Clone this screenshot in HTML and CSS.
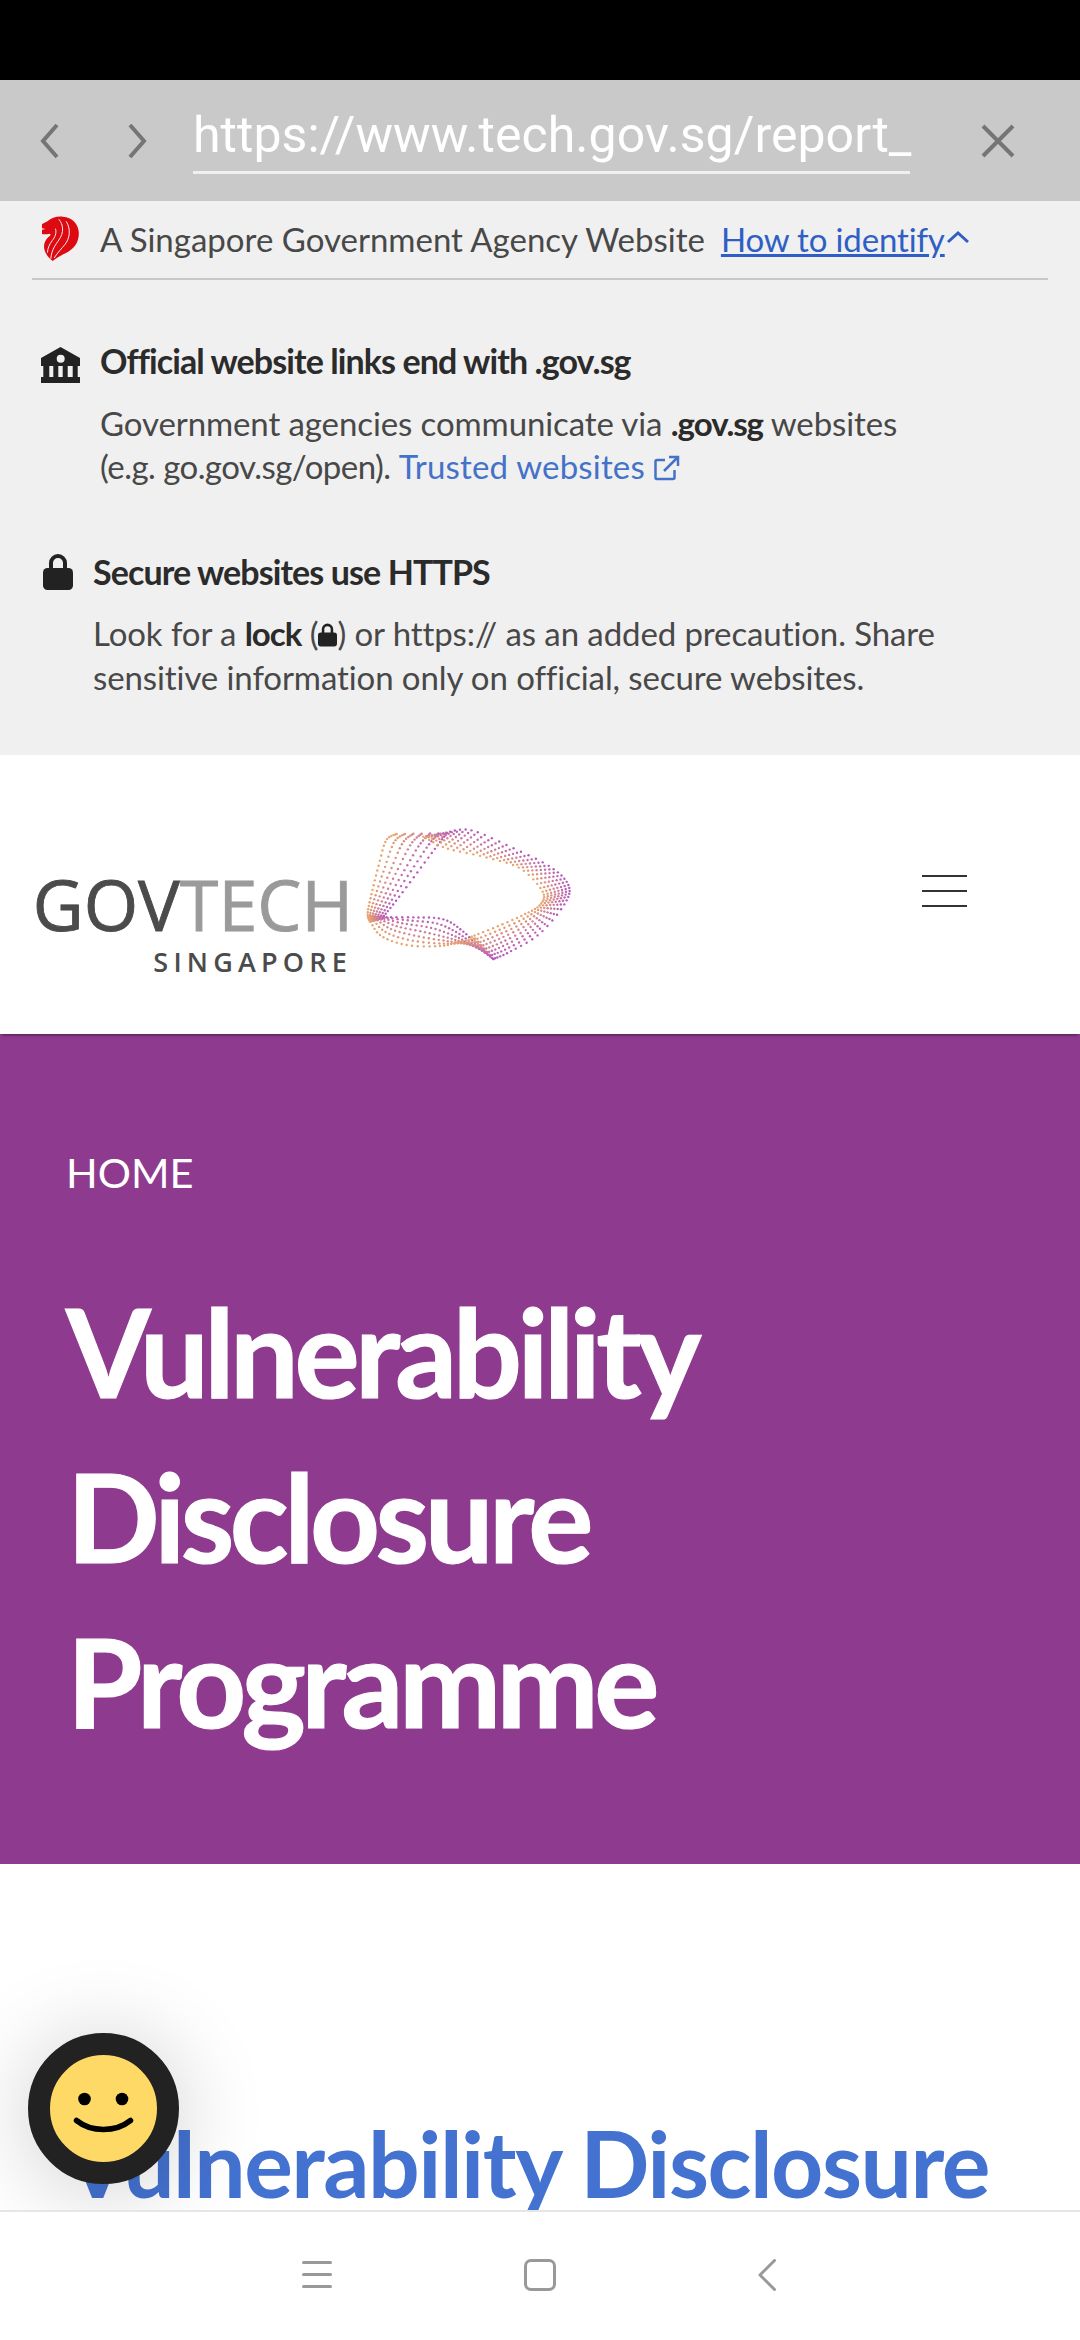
FILE: index.html
```html
<!DOCTYPE html>
<html lang="en">
<head>
<meta charset="utf-8">
<title>Vulnerability Disclosure Programme</title>
<link rel="stylesheet" href="styles.css">
</head>
<body>
<div class="screen">
  <div class="statusbar"></div>
  <div class="toolbar">
    <svg class="tb-icon tb-back" viewBox="0 0 20 36"><path d="M17 2 3 18l14 16"/></svg>
    <svg class="tb-icon tb-fwd" viewBox="0 0 20 36"><path d="M3 2l14 16L3 34"/></svg>
    <div class="url">https://www.tech.gov.sg/report_</div>
    <svg class="tb-icon tb-close" viewBox="0 0 34 34"><path d="M2 2l30 30M32 2 2 32"/></svg>
  </div>
  <main class="main">
    <section class="banner">
      <div class="masthead">
        <svg class="lion" viewBox="68 50 110 135"><path class="lion-fill" d="M68 74 84 66C95 56 112 50 130 52c28 2 48 22 48 50 0 30-16 48-40 60-14 7-28 14-38 23-14-10-24-24-26-38-2-16 6-30 20-40l-4-4c-8 2-18 3-26 0-2-2-2-8 0-11l14-3-12-3c-2-5-1-8 0-12z"/><path class="lion-line" d="M118 60c14 16 16 40 0 62-8 12-22 28-24 56M140 66c14 22 12 50-4 70-10 12-22 24-32 40M108 88c4 14-2 26-10 36-8 10-14 24-14 36"/></svg>
        <span class="agency">A Singapore Government Agency Website</span>
        <a class="identify">How to identify</a>
        <svg class="caret" viewBox="0 0 24 14"><path d="M2 12 12 3l10 9"/></svg>
      </div>
      <div class="notice notice-gov">
        <svg class="ic-bank" viewBox="0 0 39 36"><path d="M19.500 0 39 11v8H0v-8zM2.300 19h6v11h-6zM12.300 19h5v11h-5zM21.700 19h5v11h-5zM31.700 19h5v11h-5zM0 30h39v6H0z"/><circle class="ic-hole" cx="19.700" cy="11.700" r="4"/></svg>
        <div class="notice-text">
          <h3>Official website links end with .gov.sg</h3>
          <p>Government agencies communicate via <b>.gov.sg</b> websites<br><span class="tight">(e.g. go.gov.sg/open).</span> <a class="trusted">Trusted websites</a><svg class="ic-ext" viewBox="0 0 26 26"><path d="M11 5H3a1.500 1.500 0 0 0-1.500 1.500v16A1.500 1.500 0 0 0 3 24h16a1.500 1.500 0 0 0 1.500-1.500V15M10 16 24 2M15 2h9v9"/></svg></p>
        </div>
      </div>
      <div class="notice notice-lock">
        <svg class="ic-lock" viewBox="0 0 30 36"><path class="ic-shackle" d="M8 15V9a7 7 0 0 1 14 0v6"/><rect y="14" width="30" height="22" rx="4.500"/></svg>
        <div class="notice-text">
          <h3>Secure websites use HTTPS</h3>
          <p>Look for a <b>lock</b> (<svg class="ic-lock-inline" viewBox="0 0 30 36"><path class="ic-shackle" d="M8 15V9a7 7 0 0 1 14 0v6"/><rect y="14" width="30" height="22" rx="4.500"/></svg>) or https:// as an added precaution. Share<br>sensitive information only on official, secure websites.</p>
        </div>
      </div>
    </section>
    <header class="site-header">
      <div class="logo">
        <div class="logo-type">
          <div class="wordmark"><span class="gov">GOV</span><span class="tech">TECH</span></div>
          <div class="country">SINGAPORE</div>
        </div>
        <svg id="ribbon" class="ribbon" viewBox="0 0 750 510"></svg>
      </div>
      <button class="burger"><span></span><span></span><span></span></button>
    </header>
    <section class="hero">
      <div class="crumb">HOME</div>
      <h1><span class="l1">Vulnerability</span><br>Disclosure<br>Programme</h1>
    </section>
    <section class="content">
      <h2>Vulnerability Disclosure</h2>
    </section>
    <div class="fab">
      <svg viewBox="0 0 107 107"><circle cx="34.500" cy="44" r="6.300"/><circle cx="72" cy="44" r="6.300"/><path d="M26.500 65.500c15 12 39 12 54 0"/></svg>
    </div>
  </main>
  <nav class="navbar">
    <div class="nav-menu"><span></span><span></span><span></span></div>
    <div class="nav-home"></div>
    <svg class="nav-back" viewBox="0 0 18 32"><path d="M16.500 1.500 2 16l14.500 14.500"/></svg>
  </nav>
</div>
<script src="app.js"></script>
</body>
</html>
```
FILE: styles.css
```css
* { box-sizing: border-box; }
html, body { margin: 0; padding: 0; }
body { width: 1080px; height: 2340px; overflow: hidden; font-family: "Lato", "Liberation Sans", sans-serif; background: #fff; }
.screen { width: 1080px; height: 2340px; display: flex; flex-direction: column; }
.statusbar { height: 80px; background: #000; flex: none; }

.toolbar { height: 121px; flex: none; background: #c9c9c9; display: flex; align-items: center; padding-left: 40px; }
.tb-icon { fill: none; stroke: #757575; stroke-width: 4; flex: none; }
.tb-back { width: 20px; height: 36px; margin-right: 67px; }
.tb-fwd { width: 20px; height: 36px; margin-right: 46px; }
.url { width: 717px; height: 78px; align-self: flex-start; margin-top: 16px; border-bottom: 3px solid #f0f0f0; font-family: "Roboto", sans-serif; font-size: 50px; line-height: 78px; color: #fff; white-space: nowrap; flex: none; letter-spacing: 0.05px; }
.tb-close { width: 34px; height: 34px; margin-left: 71px; stroke-width: 4; }

.main { flex: 1; min-height: 0; overflow: hidden; position: relative; }

.banner { background: #f0f0f0; height: 554px; padding: 0 32px; }
.masthead { height: 79px; border-bottom: 2px solid #c8c8c8; display: flex; align-items: center; color: #484848; font-size: 33px; padding-left: 10px; padding-bottom: 2px; }
.lion { width: 37px; height: 45px; flex: none; margin-right: 21px; }
.lion-fill { fill: #dd0a12; }
.lion-line { fill: none; stroke: #f0f0f0; stroke-width: 3; }
.agency { white-space: nowrap; margin-right: 16px; }
.identify { color: #2f5fc4; text-decoration: underline; white-space: nowrap; letter-spacing: -0.15px; }
.caret { width: 24px; height: 14px; fill: none; stroke: #2f5fc4; stroke-width: 3; margin-left: 1px; margin-top: -4px; }

.notice { display: flex; }
.notice h3 { margin: 0; font-size: 34px; line-height: 44px; font-weight: 700; color: #2b2b2b; letter-spacing: -0.9px; }
.notice p { margin: 18.500px 0 0; font-size: 33px; line-height: 43.500px; color: #484848; white-space: nowrap; letter-spacing: -0.1px; }
.notice p b { color: #2b2b2b; letter-spacing: -1px; }
.tight { letter-spacing: -0.55px; }
.notice-gov { margin-top: 59px; padding-left: 9px; }
.notice-lock { margin-top: 61px; padding-left: 10.500px; }
.ic-bank { width: 39px; height: 36px; fill: #222; flex: none; margin-right: 20px; margin-top: 8px; }
.ic-hole { fill: #f0f0f0; }
.ic-lock { width: 30px; height: 36px; fill: #222; flex: none; margin-right: 20.500px; margin-top: 4px; }
.ic-shackle { fill: none; stroke: #222; stroke-width: 4; }
.ic-lock-inline { width: 19px; height: 26px; fill: #222; vertical-align: -2px; }
.trusted { color: #4472c9; letter-spacing: 0.18px; }
.ic-ext { width: 26px; height: 26px; fill: none; stroke: #4472c9; stroke-width: 2.500; margin-left: 9px; vertical-align: -2px; }

.site-header { height: 279px; background: #fff; display: flex; align-items: flex-start; justify-content: space-between; position: relative; z-index: 1; padding-right: 113px; box-shadow: 0 3px 3px -2px rgba(0,0,0,.5); }
.logo { display: flex; align-items: flex-start; padding-left: 32px; }
.logo-type { display: flex; flex-direction: column; align-items: flex-end; padding-top: 115px; width: 315px; flex: none; }
.wordmark { font-family: "Open Sans", sans-serif; font-size: 70px; line-height: 68px; letter-spacing: 0; white-space: nowrap; font-weight: 500; margin-right: -6px; -webkit-text-stroke: 0.9px currentColor; }
.gov { color: #4b4b4b; }
.tech { color: #9a9a9a; }
.country { font-family: "Open Sans", sans-serif; font-size: 27px; line-height: 30px; font-weight: 600; color: #4b4b4b; letter-spacing: 5.200px; margin-top: 9px; margin-right: -5px; }
.ribbon { width: 250px; height: 170px; flex: none; margin-left: 3px; margin-top: 55px; }
.burger { width: 45px; height: 32px; margin-top: 120px; padding: 0; border: 0; background: none; display: flex; flex-direction: column; justify-content: space-between; }
.burger span { display: block; height: 2px; background: #333; }

.hero { height: 830px; background: #8e3b8f; color: #fff; padding: 113px 66px 0; }
.crumb { font-size: 41.500px; line-height: 50px; }
.hero h1 { margin: 72px 0 0; font-size: 122px; line-height: 165px; font-weight: 700; letter-spacing: -4.500px; padding-left: 1px; white-space: nowrap; -webkit-text-stroke: 1.200px #fff; }
.l1 { margin-left: -1px; }

.content { background: #fff; padding: 244px 0 0 66px; }
.content h2 { margin: 0; font-size: 91.200px; line-height: 110px; font-weight: 700; color: #4472d0; letter-spacing: -1.500px; white-space: nowrap; }

.fab { position: absolute; left: 28px; top: 1832px; z-index: 2; width: 151px; height: 151px; border-radius: 50%; border: 22px solid #222; background: #ffd966; box-shadow: 0 6px 90px rgba(0,0,0,.2); }
.fab svg { display: block; width: 107px; height: 107px; fill: #000; }
.fab path { fill: none; stroke: #000; stroke-width: 5.500; stroke-linecap: round; }

.navbar { height: 130px; flex: none; background: #fff; border-top: 2px solid #e6e6e6; display: flex; align-items: flex-start; padding: 47px 0 0 302px; }
.nav-menu { width: 30px; height: 27px; display: flex; flex-direction: column; justify-content: space-between; margin-top: 2px; margin-right: 192px; }
.nav-menu span { display: block; height: 3px; border-radius: 2px; background: #999; }
.nav-home { width: 32px; height: 32px; border: 3px solid #999; border-radius: 7px; margin-right: 202px; }
.nav-back { width: 18px; height: 32px; fill: none; stroke: #999; stroke-width: 3; stroke-linecap: round; stroke-linejoin: round; }
```
FILE: app.js
```js
(function () {
  var NS = 'http://www.w3.org/2000/svg';
  var svg = document.getElementById('ribbon');
  var ORANGE = [232, 165, 110], PURPLE = [182, 90, 190];

  function at(points, t) {
    var n = points.length - 1, f = t * n, i = Math.min(Math.floor(f), n - 1), u = f - i;
    var p0 = points[Math.max(i - 1, 0)], p1 = points[i], p2 = points[i + 1], p3 = points[Math.min(i + 2, n)];
    function cr(a, b, c, d) {
      return 0.5 * (2 * b + (c - a) * u + (2 * a - 5 * b + 4 * c - d) * u * u + (3 * b - a - 3 * c + d) * u * u * u);
    }
    return [cr(p0[0], p1[0], p2[0], p3[0]), cr(p0[1], p1[1], p2[1], p3[1])];
  }

  function strip(edgeA, colA, edgeB, colB, lines, dots) {
    for (var k = 0; k < lines; k++) {
      var m = k / (lines - 1);
      var col = [0, 1, 2].map(function (c) { return Math.round(colA[c] + (colB[c] - colA[c]) * m); });
      for (var i = 0; i <= dots; i++) {
        var t = i / dots, a = at(edgeA, t), b = at(edgeB, t);
        var c = document.createElementNS(NS, 'circle');
        c.setAttribute('cx', (a[0] + (b[0] - a[0]) * m).toFixed(1));
        c.setAttribute('cy', (a[1] + (b[1] - a[1]) * m).toFixed(1));
        c.setAttribute('r', '3.6');
        c.setAttribute('fill', 'rgb(' + col.join(',') + ')');
        svg.appendChild(c);
      }
    }
  }

  strip([[140,72],[108,92],[85,170],[65,250],[53,310],[60,335]], ORANGE,
        [[290,70],[258,112],[200,190],[140,270],[100,320],[95,325]], PURPLE, 7, 28);
  strip([[280,70],[360,60],[480,110],[600,170],[655,225],[645,280],[570,370],[480,425],[430,447]], PURPLE,
        [[220,80],[290,115],[400,140],[510,175],[578,245],[570,285],[520,315],[440,350],[365,380]], ORANGE, 8, 46);
  strip([[100,322],[190,322],[280,328],[340,365],[390,415],[430,447]], PURPLE,
        [[55,320],[90,375],[170,405],[270,408],[330,395],[375,385]], ORANGE, 7, 30);
})();
```
